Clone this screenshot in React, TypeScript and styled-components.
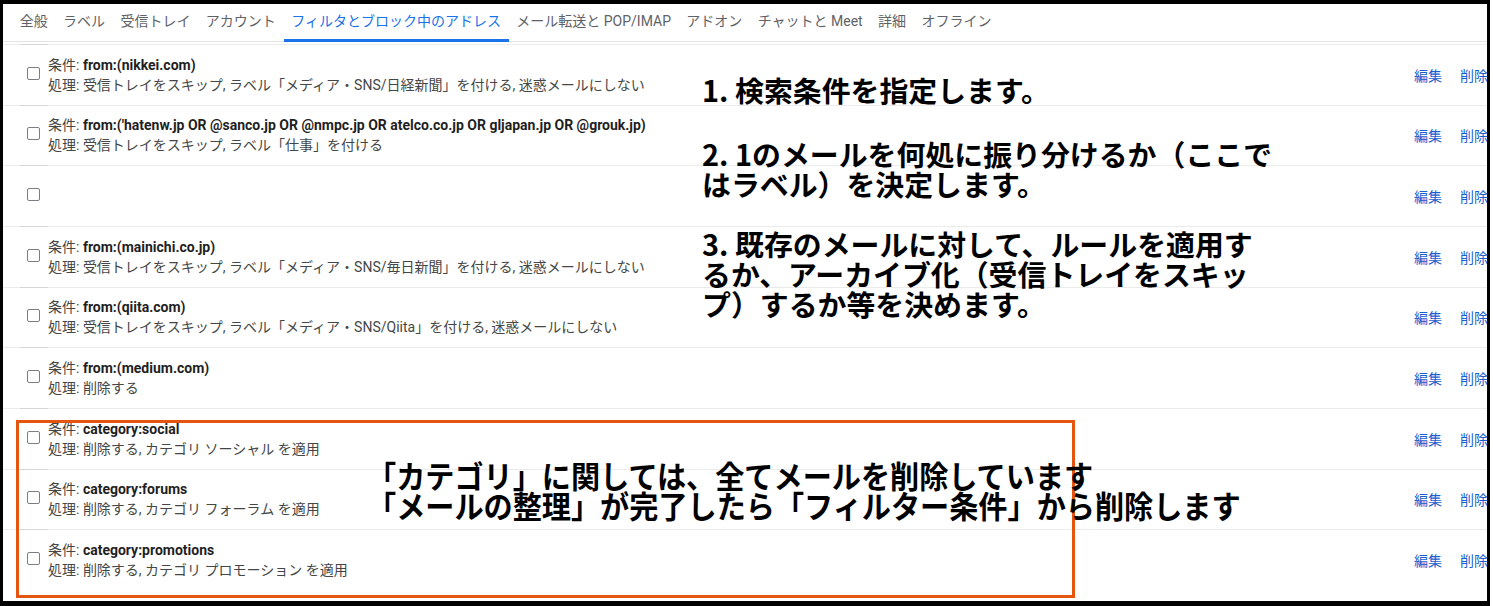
import React from 'react';
import styled, {createGlobalStyle} from 'styled-components';

const GlobalStyle = createGlobalStyle`
    html, body {
        margin: 0;
        padding: 0;
        background: #fff;
    }
    body {
        font-family: Roboto, "Noto Sans CJK JP", sans-serif;
    }
`

const tabs = [
    '全般', 'ラベル', '受信トレイ', 'アカウント', 'フィルタとブロック中のアドレス',
    'メール転送と POP/IMAP', 'アドオン', 'チャットと Meet', '詳細', 'オフライン',
]

type Filter = { cond?: string, action?: string }

const filters: Filter[] = [
    {cond: 'from:(nikkei.com)', action: '受信トレイをスキップ, ラベル「メディア・SNS/日経新聞」を付ける, 迷惑メールにしない'},
    {cond: 'from:(\'hatenw.jp OR @sanco.jp OR @nmpc.jp OR atelco.co.jp OR gljapan.jp OR @grouk.jp)', action: '受信トレイをスキップ, ラベル「仕事」を付ける'},
    {},
    {cond: 'from:(mainichi.co.jp)', action: '受信トレイをスキップ, ラベル「メディア・SNS/毎日新聞」を付ける, 迷惑メールにしない'},
    {cond: 'from:(qiita.com)', action: '受信トレイをスキップ, ラベル「メディア・SNS/Qiita」を付ける, 迷惑メールにしない'},
    {cond: 'from:(medium.com)', action: '削除する'},
    {cond: 'category:social', action: '削除する, カテゴリ ソーシャル を適用'},
    {cond: 'category:forums', action: '削除する, カテゴリ フォーラム を適用'},
    {cond: 'category:promotions', action: '削除する, カテゴリ プロモーション を適用'},
]

export default function App() {
    return (
        <>
            <GlobalStyle/>
            <Frame>
                <TabBar>
                    {tabs.map((t, i) => (
                        <Tab key={t} active={i === 4}>{t}</Tab>
                    ))}
                </TabBar>

                <List>
                    {filters.map((f, i) => (
                        <Row key={i}>
                            <Checkbox/>
                            <Info>
                                {f.cond && <Line>条件: <b>{f.cond}</b></Line>}
                                {f.action && <Line>処理: {f.action}</Line>}
                            </Info>
                            <Links>
                                <LinkText>編集</LinkText>
                                <LinkText>削除</LinkText>
                            </Links>
                        </Row>
                    ))}
                </List>

                <Notes>
                    <Note>1. 検索条件を指定します。</Note>
                    <Note gap={34}>2. 1のメールを何処に振り分けるか（ここで<br/>はラベル）を決定します。</Note>
                    <Note gap={30}>3. 既存のメールに対して、ルールを適用す<br/>るか、アーカイブ化（受信トレイをスキッ<br/>プ）するか等を決めます。</Note>
                </Notes>

                <Highlight/>

                <CategoryNote>
                    「カテゴリ」に関しては、全てメールを削除しています<br/>
                    「メールの整理」が完了したら「フィルター条件」から削除します
                </CategoryNote>
            </Frame>
        </>
    );
}

const Frame = styled.div`
    position: relative;
    box-sizing: border-box;
    width: 1490px;
    height: 606px;
    border: 3px solid #000;
    border-top-width: 4px;
    border-bottom-width: 5px;
    overflow: hidden;
    background: #fff;
`

const TabBar = styled.div`
    display: flex;
    height: 37px;
    padding-left: 9px;
    border-bottom: 1px solid #e3e3e3;
`

const Tab = styled.div<{ active?: boolean }>`
    display: flex;
    align-items: center;
    box-sizing: border-box;
    padding: 0 7.7px 4px;
    font-size: 14px;
    white-space: nowrap;
    color: ${p => p.active ? '#1a73e8' : '#5f6368'};
    border-bottom: 3px solid ${p => p.active ? '#1a73e8' : 'transparent'};
    margin-bottom: -1px;
`

const List = styled.div`
    padding-top: 2px;
`

const Row = styled.div`
    position: relative;
    display: flex;
    align-items: center;
    box-sizing: border-box;
    height: 60.67px;
    padding-left: 24px;
    border-top: 1px solid #ebebeb;

    &::before {
        content: '';
        position: absolute;
        left: 17px;
        top: -1px;
        width: 28px;
        height: 1px;
        background: #d6d6d6;
    }
`

const Checkbox = styled.div`
    flex: none;
    box-sizing: border-box;
    width: 13px;
    height: 13px;
    margin-top: -3px;
    border: 1.5px solid #7a7e83;
    border-radius: 2px;
`

const Info = styled.div`
    display: flex;
    flex-direction: column;
    margin-left: 8px;
    font-size: 14px;
    line-height: 20px;
    color: #444746;

    b {
        font-weight: 700;
        color: #1f1f1f;
    }
`

const Line = styled.div`
    white-space: nowrap;
`

const Links = styled.div`
    display: flex;
    gap: 18px;
    margin-left: auto;
    margin-right: -1px;
`

const LinkText = styled.span`
    font-size: 14px;
    color: #1a5fd0;
`

const Notes = styled.div`
    position: absolute;
    left: 699px;
    top: 70px;
    display: flex;
    flex-direction: column;
`

const Note = styled.div<{ gap?: number }>`
    margin-top: ${p => p.gap ?? 0}px;
    font-family: "Noto Sans CJK JP", sans-serif;
    font-weight: 700;
    font-size: 28.9px;
    line-height: 30px;
    color: #000;
    white-space: nowrap;
`

const Highlight = styled.div`
    position: absolute;
    left: 13px;
    top: 416px;
    width: 1059px;
    height: 178px;
    box-sizing: border-box;
    border: 3px solid #e4560f;
`

const CategoryNote = styled.div`
    position: absolute;
    left: 364px;
    top: 456px;
    font-family: "Noto Sans CJK JP", sans-serif;
    font-weight: 700;
    font-size: 31px;
    line-height: 30px;
    color: #000;
    white-space: nowrap;
    transform: scaleX(0.94);
    transform-origin: left top;
`
